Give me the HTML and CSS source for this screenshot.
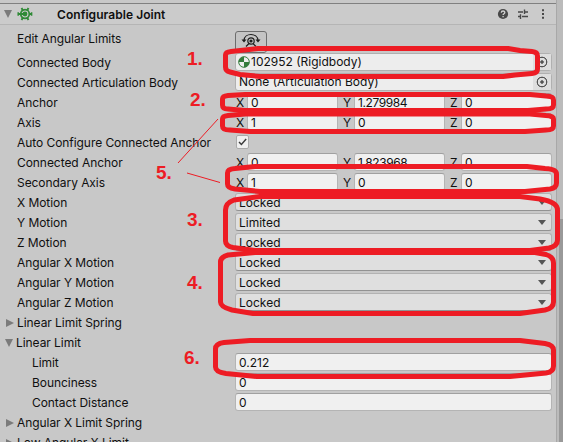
FILE: index.html
```html
<!DOCTYPE html>
<html lang="en">
<head>
<meta charset="utf-8">
<title>Configurable Joint</title>
<link rel="stylesheet" href="styles.css">
</head>
<body>
<main class="inspector">
  <header class="head">
    <i class="tri down"></i>
    <svg class="joint" width="16" height="16" viewBox="0 0 16 16"><g fill="none" stroke="#2f8a36"><circle cx="8" cy="8" r="4.300" stroke-width="1.700"/><path d="M1.500 8H8M4.500 2L6 4.500M11.500 2L10 4.500M4.500 14L6 11.500M11.500 14L10 11.500M12 8H14.500" stroke-width="1.900"/><path d="M1.200 6.300V9.700M14.600 6.300V9.700" stroke-width="1.500"/></g><circle cx="8" cy="8" r="2.400" fill="#2f8a36"/></svg>
    <h1>Configurable Joint</h1>
    <svg class="tools" width="52" height="14" viewBox="0 0 52 14"><circle cx="6" cy="7" r="5.1" fill="#484848"/><path d="M4.3 5.7C4.3 3.4 7.8 3.5 7.8 5.5C7.8 6.8 6.1 6.6 6.1 8M6.1 9V10.3" fill="none" stroke="#d0d0d0" stroke-width="1.3"/><path d="M21 5H26M28 5H31M21 9.5H23M25 9.5H31M27.5 2.5V7M23.5 7.2V12" stroke="#484848" stroke-width="1.4"/><path d="M45 2.3h2v2h-2zM45 6h2v2h-2zM45 9.7h2v2h-2z" fill="#484848"/></svg>
  </header>
  <section class="rows">
    <div class="row edit"><label>Edit Angular Limits</label><button class="limits"><svg width="20" height="18" viewBox="0 0 20 18"><g fill="none" stroke="#1d1d1d" stroke-width="1.200"><path d="M3 8.500C3.500 .5 16.500 .5 17 8.500"/><circle cx="10" cy="9" r="3.200"/><path d="M8 11.500L5 14.500M12 11.500L15 14.500"/></g><path d="M.5 7.500H5.500L3 10.500ZM14.500 7.500H19.500L17 10.500Z" fill="#1d1d1d"/><circle cx="10" cy="9" r="1.600" fill="#1d1d1d"/></svg></button></div>
    <div class="row"><label>Connected Body</label><div class="box object"><svg class="body" width="12" height="12" viewBox="0 0 12 12"><circle cx="6" cy="6" r="5.300" fill="#eee" stroke="#347b3b"/><path d="M6 6V.7A5.300 5.300 0 0 0 .7 6ZM6 6V11.300A5.300 5.300 0 0 0 11.300 6Z" fill="#347b3b"/></svg><span>102952 (Rigidbody)</span><b class="pick"></b></div></div>
    <div class="row"><label>Connected Articulation Body</label><div class="box object"><span>None (Articulation Body)</span><b class="pick"></b></div></div>
    <div class="row"><label>Anchor</label><div class="vector"><em>X</em><div class="box">0</div><em>Y</em><div class="box">1.279984</div><em>Z</em><div class="box">0</div></div></div>
    <div class="row"><label>Axis</label><div class="vector"><em>X</em><div class="box">1</div><em>Y</em><div class="box">0</div><em>Z</em><div class="box">0</div></div></div>
    <div class="row"><label>Auto Configure Connected Anchor</label><div class="check"><svg width="12" height="12" viewBox="0 0 12 12"><path d="M2.200 6L4.800 8.700L10 2.800" fill="none" stroke="#3c3c3c" stroke-width="1.600"/></svg></div></div>
    <div class="row"><label>Connected Anchor</label><div class="vector"><em>X</em><div class="box">0</div><em>Y</em><div class="box">1.823968</div><em>Z</em><div class="box">0</div></div></div>
    <div class="row"><label>Secondary Axis</label><div class="vector"><em>X</em><div class="box">1</div><em>Y</em><div class="box">0</div><em>Z</em><div class="box">0</div></div></div>
    <div class="row"><label>X Motion</label><div class="box select">Locked</div></div>
    <div class="row"><label>Y Motion</label><div class="box select">Limited</div></div>
    <div class="row"><label>Z Motion</label><div class="box select">Locked</div></div>
    <div class="row"><label>Angular X Motion</label><div class="box select">Locked</div></div>
    <div class="row"><label>Angular Y Motion</label><div class="box select">Locked</div></div>
    <div class="row"><label>Angular Z Motion</label><div class="box select">Locked</div></div>
    <div class="row fold"><i class="tri"></i><label>Linear Limit Spring</label></div>
    <div class="row fold"><i class="tri down"></i><label>Linear Limit</label></div>
    <div class="row nested"><label>Limit</label><div class="box">0.212</div></div>
    <div class="row nested"><label>Bounciness</label><div class="box">0</div></div>
    <div class="row nested"><label>Contact Distance</label><div class="box">0</div></div>
    <div class="row fold"><i class="tri"></i><label>Angular X Limit Spring</label></div>
    <div class="row fold"><i class="tri"></i><label>Low Angular X Limit</label></div>
  </section>
</main>
<aside class="scroll"><div class="thumb"></div></aside>
<svg class="notes" width="563" height="442" viewBox="0 0 563 442">
  <g class="rings">
    <path d="M258 48.500H508L520 50.500L532 51.500Q537.500 52 537.500 56V69Q537.500 73 532 73.500L515 75L503 76.500H260L240 74.500L230 72Q225.500 71 225.500 67V55Q225.500 52 231 51.500Z"/>
    <path d="M245 94.500H530L546 96Q553.500 96 553.500 100V105Q553.500 109 546 109L528 110.500H245L228 109Q222.500 109 222.500 105V99Q222.500 96 228 95.500Z"/>
    <path d="M245 114H530L546 115.500Q553.500 116 553.500 119V126Q553.500 130 546 130L525 131.500H250L230 130Q222.500 130 222.500 126V119Q222.500 116 228 115.500Z"/>
    <path d="M255 166.500H527L545 168.500Q556.500 169 556.500 174V183Q556.500 188 550 189L525 191.500H260L235 189Q227.500 188 227.500 184V173Q227.500 169 235 168.500Z"/>
    <path d="M260 196.500H520L540 199Q557.500 202 557.500 210V240Q557.500 246 549 248L530 250.500H255L233 247.500Q225.500 246 225.500 241V210Q225.500 203 234 200Z"/>
    <path d="M255 252.500H535L546 254.500Q553.500 257 553.500 263V302Q553.500 308 545 310L520 313.500H253L232 310Q220.500 307 220.500 302V262Q220.500 257 228 255Z"/>
    <path d="M250 340.500H520L545 343.500Q553.500 345 553.500 350V366Q553.500 372 546 373L510 376.500H257L226 373.500Q215.500 372 215.500 367V349Q215.500 343.500 224 342.500Z"/>
  </g>
  <path class="pointer" d="M218 119L178 163M187 173L220 182.500"/>
  <g class="numbers"><text x="187" y="65">1.</text><text x="190" y="106">2.</text><text x="156" y="179">5.</text><text x="187" y="226">3.</text><text x="187" y="289">4.</text><text x="184" y="364">6.</text></g>
</svg>
</body>
</html>
```
FILE: styles.css
```css
* { box-sizing: border-box; }
body {
  margin: 0;
  height: 442px;
  overflow: hidden;
  position: relative;
  display: flex;
  background: #c8c8c8;
  color: #101010;
  font: 12px/18px Inter, sans-serif;
}
.inspector { width: 556px; flex: none; padding-top: 3px; }
.head {
  height: 22px;
  display: flex;
  align-items: center;
  padding-left: 4px;
  border-top: 1px solid #808080;
  border-bottom: 1px solid #b5b5b5;
  background: #cbcbcb;
}
h1 { margin: 1px auto 0 24px; font-size: 12px; font-weight: 600; line-height: 20px; letter-spacing: .05px; white-space: nowrap; }
.joint { margin-left: 5px; }
.tools { margin-right: 7px; }
.tri { flex: none; width: 0; height: 0; border: solid transparent; border-width: 4px 0 4px 8px; border-left-color: #7b7b7b; }
.tri.down { border-width: 8px 4.5px 0; border-color: #7b7b7b transparent transparent; }
.row { height: 20px; display: flex; align-items: flex-start; padding-left: 17px; padding-right: 4px; }
.edit { height: 28px; padding-top: 6px; }
.edit label { padding-top: 0; margin-top: -1px; }
label { width: 218px; flex: none; white-space: nowrap; padding-top: 1px; letter-spacing: -.06px; }
.box {
  flex: 1;
  min-width: 0;
  height: 18px;
  line-height: 18px;
  padding-left: 3px;
  border: 1px solid #b4b4b4;
  border-top-color: #a0a0a0;
  border-radius: 3px;
  background: #f0f0f0;
  white-space: nowrap;
}
.limits {
  width: 32px;
  height: 22px;
  padding: 0;
  display: flex;
  justify-content: center;
  border: 1px solid #6d6d6d;
  border-radius: 3px;
  background: #c4c4c4;
}
.object { display: flex; align-items: center; background: #ededed; border-color: #b0b0b0; }
.body { margin-left: -1px; margin-right: 1px; }
.pick { width: 18px; height: 16px; margin-left: auto; background: radial-gradient(circle, #555 0 1.4px, transparent 2px 4px, #555 4.5px 5px, transparent 5.7px) #dedede; }
.vector { flex: 1; display: grid; grid-template-columns: 12px 91px 16px 91px 16px 91px; }
.vector .box { letter-spacing: -.4px; }
em { font-style: normal; padding-left: 5px; line-height: 20px; }
em:first-child { padding-left: 1px; }
.check { width: 13px; height: 14px; margin: 2px 0 0 1px; display: flex; align-items: center; justify-content: center; background: #f0f0f0; border: 1px solid #aaa; border-radius: 2px; }
.select { display: flex; justify-content: space-between; background: #dfdfdf; border-color: #b2b2b2 #b2b2b2 #929292; }
.select::after { content: ""; margin: 6px 5px 0 0; border: solid transparent; border-width: 5px 4px 0; height: 0; border-top-color: #555; }
.fold { padding-left: 6px; }
.fold .tri { margin: 6px 3px 0 0; }
.fold .tri.down { margin: 6px 3px 0 -1px; }
.nested { padding-left: 32px; }
.nested label { width: 203px; }
.scroll { width: 7px; padding: 219px 0 0 2px; background: #bbb; border-left: 1px solid #a8a8a8; }
.thumb { height: 223px; background: #999; }
.notes { position: absolute; inset: 0; }
.rings { fill: none; stroke: #ed1c24; stroke-width: 5; stroke-linejoin: round; }
.pointer { fill: none; stroke: #ed1c24; stroke-width: 1; }
.numbers { fill: #ed1c24; font: bold 19px "Liberation Sans", sans-serif; }
```
